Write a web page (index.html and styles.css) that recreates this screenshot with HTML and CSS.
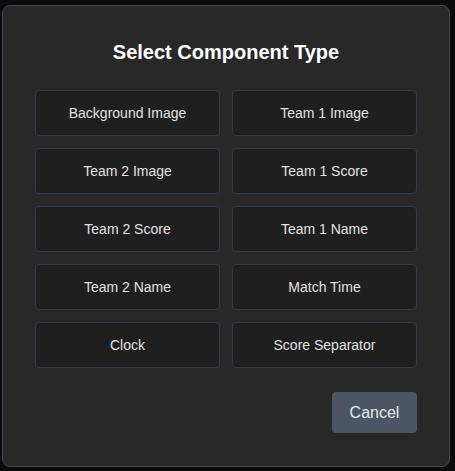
FILE: index.html
```html
<!DOCTYPE html>
<html>
<head>
<meta charset="utf-8">
<link rel="stylesheet" href="styles.css">
</head>
<body>
<div class="overlay">
  <div class="modal">
    <h2 class="title">Select Component Type</h2>
    <div class="grid">
      <button class="opt">Background Image</button>
      <button class="opt">Team 1 Image</button>
      <button class="opt">Team 2 Image</button>
      <button class="opt">Team 1 Score</button>
      <button class="opt">Team 2 Score</button>
      <button class="opt">Team 1 Name</button>
      <button class="opt">Team 2 Name</button>
      <button class="opt">Match Time</button>
      <button class="opt">Clock</button>
      <button class="opt">Score Separator</button>
    </div>
    <div class="actions">
      <button class="cancel">Cancel</button>
    </div>
  </div>
</div>
</body>
</html>
```

FILE: styles.css
```css
* { box-sizing: border-box; }
html, body {
  margin: 0;
  padding: 0;
  background: #0b0b0b;
  width: 455px;
  height: 471px;
  overflow: hidden;
  font-family: "Liberation Sans", Arial, sans-serif;
}
.overlay {
  padding: 5px 0 0 2px;
}
.modal {
  width: 448px;
  height: 462px;
  background: #282828;
  border: 1px solid #434955;
  border-radius: 8px;
  padding: 32px;
  display: flex;
  flex-direction: column;
}
.title {
  margin: 0 0 24px 0;
  font-size: 20px;
  line-height: 28px;
  font-weight: 700;
  color: #ffffff;
  text-align: center;
}
.grid {
  display: grid;
  grid-template-columns: 1fr 1fr;
  gap: 12px;
}
.opt {
  height: 46px;
  padding: 0;
  background: #1f1f1f;
  border: 1px solid #333a47;
  border-radius: 4px;
  color: #e2e2e2;
  font-family: "Liberation Sans", Arial, sans-serif;
  font-size: 14px;
  line-height: 20px;
  text-align: center;
}
.actions {
  display: flex;
  justify-content: flex-end;
  margin-top: 24px;
}
.cancel {
  width: 85px;
  height: 41px;
  padding: 0;
  background: #4b5563;
  border: none;
  border-radius: 4px;
  color: #e8e8e8;
  font-family: "Liberation Sans", Arial, sans-serif;
  font-size: 16px;
  line-height: 24px;
}
```
